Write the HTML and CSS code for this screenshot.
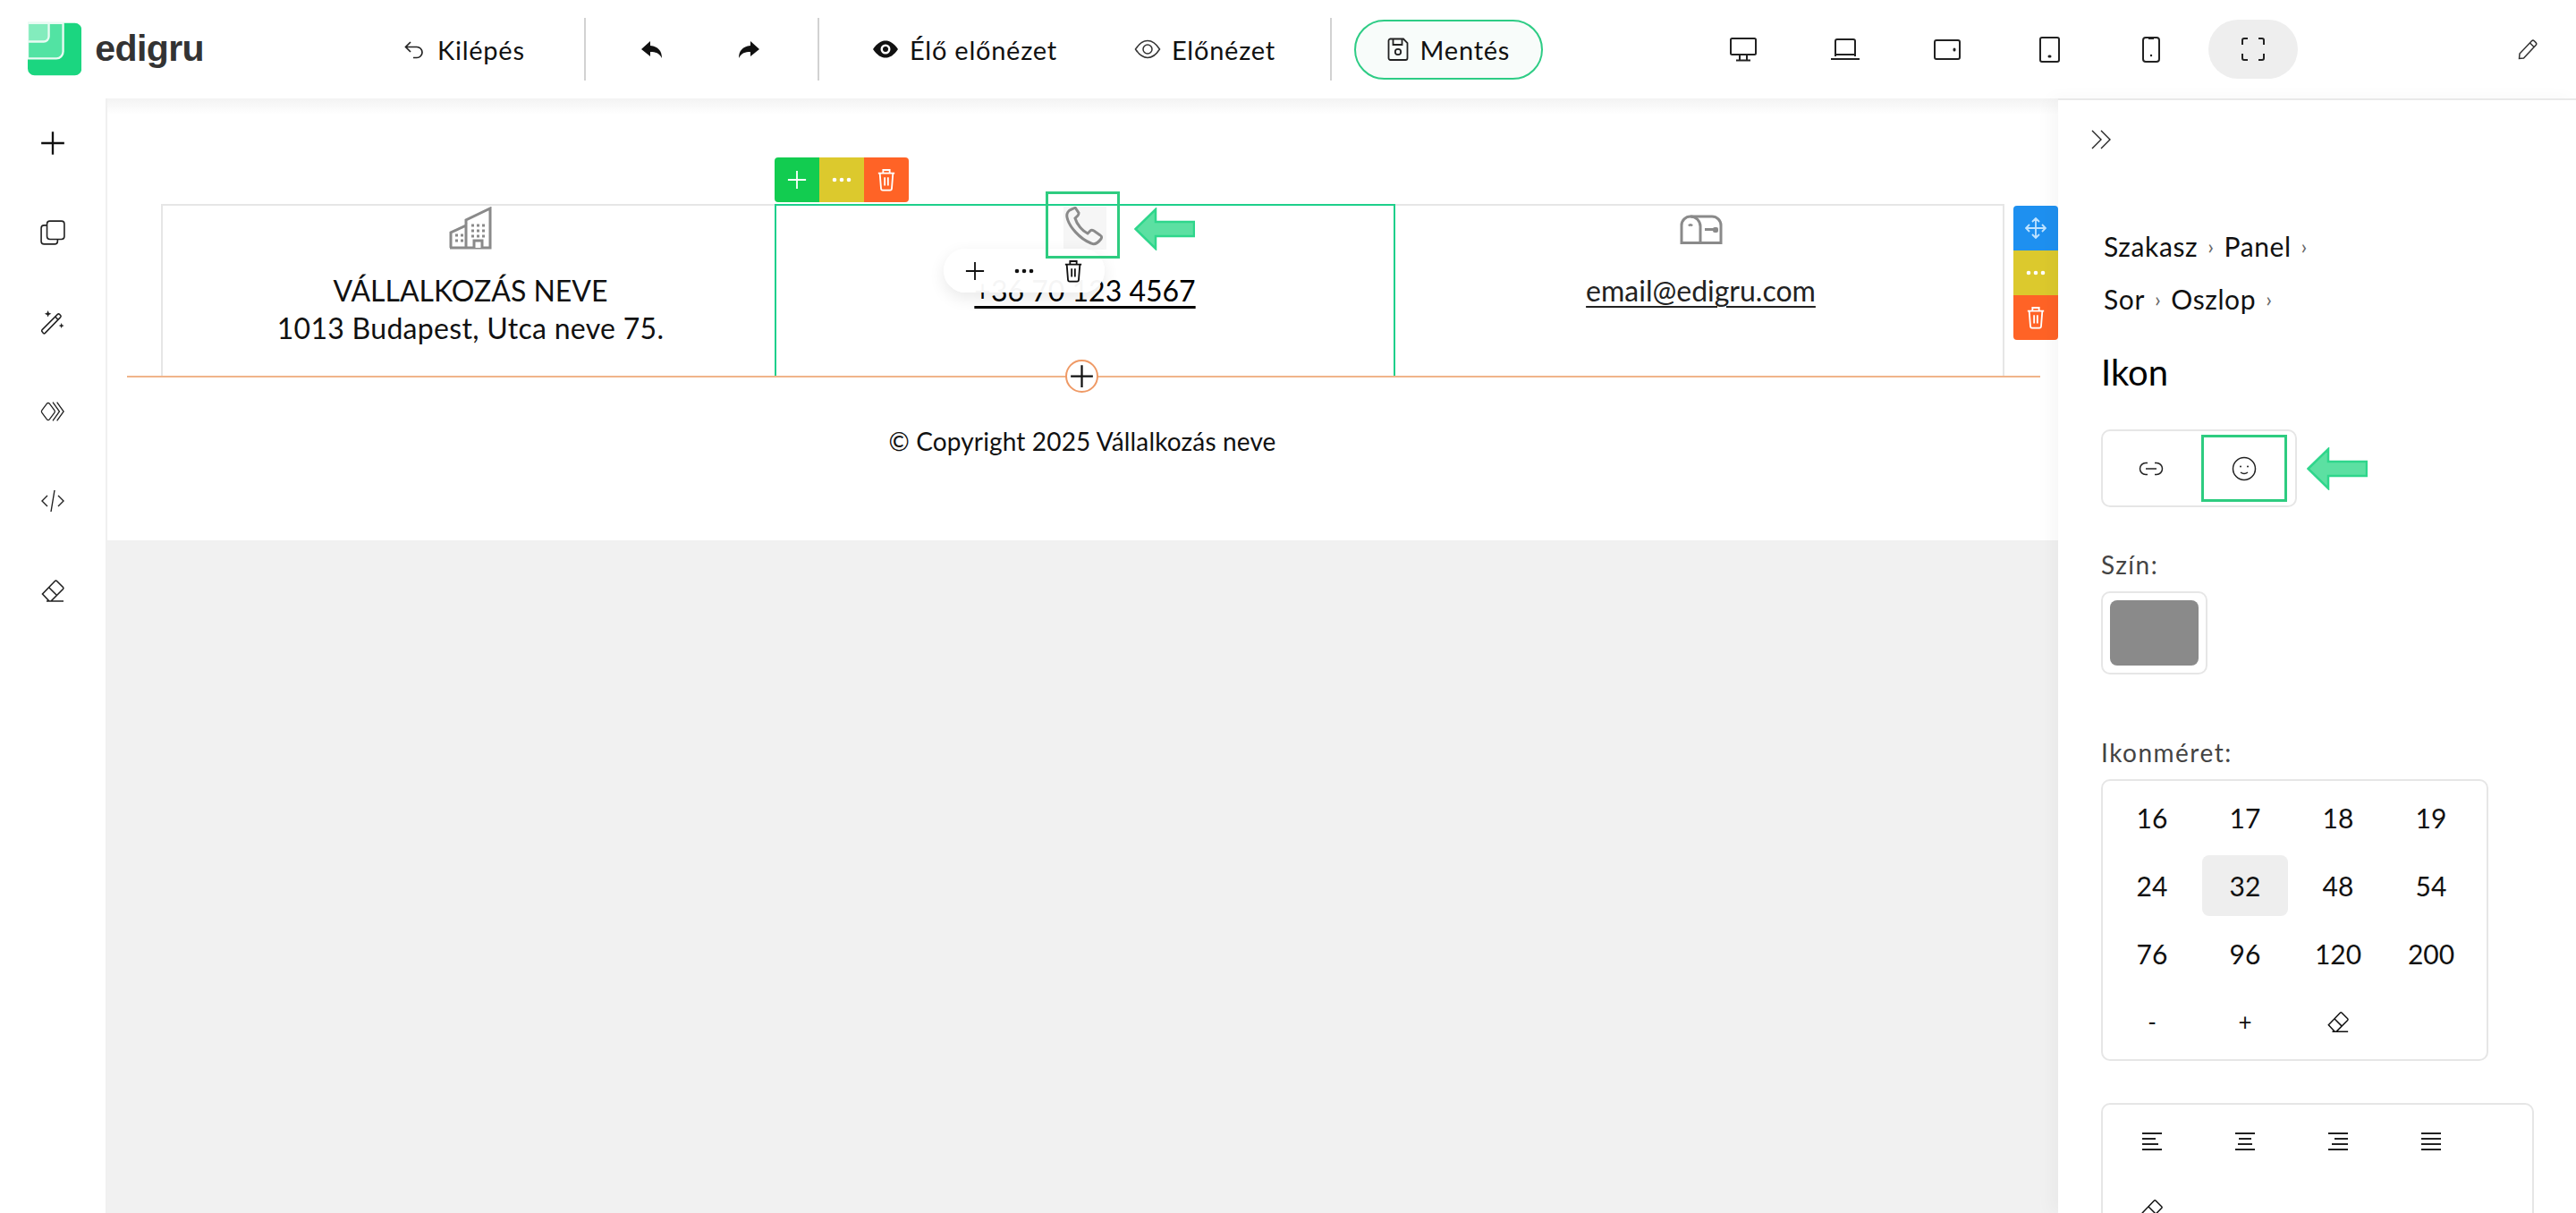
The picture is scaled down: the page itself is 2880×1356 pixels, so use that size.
FILE: index.html
```html
<!DOCTYPE html>
<html lang="hu">
<head>
<meta charset="utf-8">
<title>edigru</title>
<link rel="stylesheet" href="styles.css">
</head>
<body>
<svg class="defs" width="0" height="0" aria-hidden="true">
  <symbol id="trash" viewBox="0 0 24 28"><path d="M2 6h20M8 6V2h8v4M4 6l1.500 19a2 2 0 0 0 2 1.800h9a2 2 0 0 0 2-1.800L20 6M10 11v10M14 11v10" fill="none" stroke="currentColor" stroke-width="2"/></symbol>
  <symbol id="eraser" viewBox="0 0 28 28"><path d="M10 26 2.500 18 16.500 3.500a1.500 1.500 0 0 1 2 0l7 7a1.500 1.500 0 0 1 0 2L12 26M9.500 10.500l9 9M7 26h19" fill="none" stroke="currentColor" stroke-width="1.600"/></symbol>
  <symbol id="plus" viewBox="0 0 24 24"><path d="M12 1v22M1 12h22" fill="none" stroke="currentColor" stroke-width="2"/></symbol>
  <symbol id="dots" viewBox="0 0 24 6"><circle cx="4" cy="3" r="2.300" fill="currentColor"/><circle cx="12" cy="3" r="2.300" fill="currentColor"/><circle cx="20" cy="3" r="2.300" fill="currentColor"/></symbol>
  <symbol id="arrow" viewBox="0 0 68 48"><path d="M1.500 24 24 2v14h43v16H24v14z" fill="#5ce0a2" stroke="#2fd68c" stroke-width="2.500"/></symbol>
</svg>

<div class="app">
  <header class="topbar">
    <a class="brand">
      <svg class="brand-mark" viewBox="0 0 64 62"><rect width="64" height="62" rx="8" fill="#1bd680"/><path d="M0 0h42v34a8 8 0 0 1-8 8H0z" fill="#52e3a3" stroke="#e9fbf3" stroke-width="2.500"/><path d="M0 0h25v16a6 6 0 0 1-6 6H0z" fill="#83ecbd" stroke="#e9fbf3" stroke-width="2.500"/></svg>
      <span class="brand-name">ed<span class="brand-i">i</span>gru</span>
    </a>
    <button class="nav-btn nav-exit"><svg class="ic-nav" viewBox="0 0 24 24"><path d="M8 4 2.500 9.500 8 15M3 9.500h12a6 6 0 0 1 6 6v0a6 6 0 0 1-6 6h-4" fill="none" stroke="#222" stroke-width="1.700"/></svg>Kilépés</button>
    <span class="vline vline-a"></span>
    <button class="icon-btn undo"><svg viewBox="0 0 26 26"><path d="M11 4 1 13l10 8v-5c6 0 10 1 13 7 0-8-4-13-13-14z" fill="#111"/></svg></button>
    <button class="icon-btn redo"><svg viewBox="0 0 26 26"><path d="M15 4l10 9-10 8v-5C9 16 5 17 2 23c0-8 4-13 13-14z" fill="#111"/></svg></button>
    <span class="vline vline-b"></span>
    <button class="nav-btn nav-live"><svg class="ic-eye" viewBox="0 0 30 22"><path d="M1 11C6 4 10 1.500 15 1.500S24 4 29 11c-5 7-9 9.500-14 9.500S6 18 1 11z" fill="#111"/><circle cx="15" cy="11" r="5.500" fill="#fff"/><path d="M15 7.500V11h3.500" fill="#111"/><circle cx="15" cy="11" r="3" fill="#111"/></svg>Élő előnézet</button>
    <button class="nav-btn nav-preview"><svg class="ic-eye" viewBox="0 0 30 22"><path d="M1.500 11C6 4 10 1.500 15 1.500S24 4 28.500 11C24 18 20 20.500 15 20.500S6 18 1.500 11z" fill="none" stroke="#333" stroke-width="1.500"/><circle cx="15" cy="11" r="5" fill="none" stroke="#333" stroke-width="1.500"/></svg>Előnézet</button>
    <span class="vline vline-c"></span>
    <button class="save-btn"><svg class="ic-save" viewBox="0 0 24 26"><path d="M3 1.500h15L22.500 6v17a2 2 0 0 1-2 2h-17a2 2 0 0 1-2-2V3.500a2 2 0 0 1 2-2zM6.500 1.500V8h10V1.500" fill="none" stroke="#222" stroke-width="1.800"/><circle cx="12" cy="16" r="3.200" fill="none" stroke="#222" stroke-width="1.800"/></svg>Mentés</button>
    <div class="devices">
      <button class="dev"><svg width="30" height="27" viewBox="0 0 30 27"><rect x="1" y="1" width="28" height="18" rx="1.500" fill="none" stroke="#222" stroke-width="2"/><path d="M11 19v6M19 19v6M7 25.500h16" fill="none" stroke="#222" stroke-width="2"/></svg></button>
      <button class="dev"><svg width="32" height="24" viewBox="0 0 32 24"><path d="M5 20V3a2 2 0 0 1 2-2h18a2 2 0 0 1 2 2v17" fill="none" stroke="#222" stroke-width="2"/><path d="M5 18h22M0 23h32" stroke="#222" stroke-width="2"/></svg></button>
      <button class="dev"><svg width="30" height="23" viewBox="0 0 30 23"><rect x="1" y="1" width="28" height="21" rx="2" fill="none" stroke="#222" stroke-width="2"/><rect x="21.500" y="9.500" width="3" height="4" rx="1.500" fill="#222"/></svg></button>
      <button class="dev"><svg width="23" height="29" viewBox="0 0 23 29"><rect x="1" y="1" width="21" height="27" rx="2" fill="none" stroke="#222" stroke-width="2"/><rect x="9.500" y="20.500" width="4" height="3" rx="1.500" fill="#222"/></svg></button>
      <button class="dev"><svg width="20" height="29" viewBox="0 0 20 29"><rect x="1" y="1" width="18" height="27" rx="3" fill="none" stroke="#222" stroke-width="2"/><path d="M7 2h6" stroke="#222" stroke-width="2"/><circle cx="10" cy="21" r="1.200" fill="#222"/></svg></button>
      <button class="dev dev-on"><svg width="26" height="26" viewBox="0 0 26 26"><path d="M1 8V3a2 2 0 0 1 2-2h4M19 1h4a2 2 0 0 1 2 2v5M25 18v5a2 2 0 0 1-2 2h-4M7 25H3a2 2 0 0 1-2-2v-5" fill="none" stroke="#222" stroke-width="2"/></svg></button>
    </div>
    <button class="pencil"><svg width="22" height="23" viewBox="0 0 22 23"><path d="M1.500 21.500 2 16 15.500 1.800a2 2 0 0 1 2.800 0l1.800 1.800a2 2 0 0 1 0 2.800L6.500 21zM13.500 4l5 5" fill="none" stroke="#333" stroke-width="1.500"/></svg></button>
  </header>

  <div class="workspace">
    <nav class="rail">
      <svg class="rail-ic" viewBox="0 0 24 24"><use href="#plus"/></svg>
      <svg class="rail-ic" viewBox="0 0 26 26"><rect x="7" y="1" width="18" height="19" rx="3" fill="none" stroke="#222" stroke-width="1.500"/><path d="M7 5.500H4a3 3 0 0 0-3 3V22a3 3 0 0 0 3 3h11a3 3 0 0 0 3-3v-2" fill="none" stroke="#222" stroke-width="1.500"/></svg>
      <svg class="rail-ic" viewBox="0 0 26 26"><path d="M2 21 18 5a1.500 1.500 0 0 1 2 0l1 1a1.500 1.500 0 0 1 0 2L5 24.500a1.300 1.300 0 0 1-1.800 0l-1.200-1.500a1.300 1.300 0 0 1 0-2zM15.500 7.500l3.500 3.500" fill="none" stroke="#222" stroke-width="1.400"/><path d="M8 1l1 2.500L11.500 4.500 9 5.500 8 8 7 5.500 4.500 4.500 7 3.500zM22 14l.8 2 2 .8-2 .8-.8 2-.8-2-2-.8 2-.8z" fill="#222"/></svg>
      <svg class="rail-ic" viewBox="0 0 30 24"><path d="M2 10.500 8 2.500a2 2 0 0 1 3 0l6 8a2.500 2.500 0 0 1 0 3l-6 8a2 2 0 0 1-3 0l-6-8a2.500 2.500 0 0 1 0-3z" fill="none" stroke="#222" stroke-width="1.400"/><path d="M15 1l8 11-8 11M20 1l8 11-8 11" fill="none" stroke="#222" stroke-width="1.400"/></svg>
      <svg class="rail-ic" viewBox="0 0 28 26"><path d="M8 7 2 13l6 6M20 7l6 6-6 6M16 1l-4 24" fill="none" stroke="#222" stroke-width="1.400"/></svg>
      <svg class="rail-ic ic-dark"><use href="#eraser"/></svg>
    </nav>

    <main class="stage">
      <section class="page">
        <div class="contact-row">
          <div class="cell">
            <svg class="ic-cell" viewBox="0 0 48 48"><path d="M2 46V29l17-8v25M19 46V15L46 2v44zM1 46h46" fill="none" stroke="#8a8a8a" stroke-width="3"/><path d="M26 40h0M25 21h3M31 21h3M37 21h3M25 27h3M31 27h3M37 27h3M25 33h3M31 33h3M37 33h3M7 32h3M13 32h3M7 38h3M13 38h3" stroke="#8a8a8a" stroke-width="3"/><path d="M28 46v-8h9v8" fill="#fff" stroke="#8a8a8a" stroke-width="3"/></svg>
            <p class="cell-text">VÁLLALKOZÁS NEVE<br><span class="addr">1013 Budapest, Utca neve 75.</span></p>
          </div>
          <div class="cell cell-active">
            <div class="ic-cell ic-phone"><svg viewBox="0 0 48 48"><path d="M9 3C6 4 3 7 4 12c2 10 14 24 27 29 4 2 8-1 11-5 1-2 1-3-1-4l-7-5c-2-1-3-1-4 0l-3 3c-6-3-12-10-14-17l3-3c1-1 1-2 1-3l-4-6C12 2 11 2 9 3z" fill="none" stroke="#8a8a8a" stroke-width="3"/></svg></div>
            <p class="cell-text"><a class="link">+36 70 123 4567</a></p>
          </div>
          <div class="cell">
            <svg class="ic-cell ic-mail" viewBox="0 0 48 33"><path d="M12 2h24a10 10 0 0 1 10 10v19.500H2V12A10 10 0 0 1 12 2z" fill="none" stroke="#8a8a8a" stroke-width="3"/><path d="M12 2a11 11 0 0 1 11 11v18.500" fill="none" stroke="#8a8a8a" stroke-width="3"/><path d="M10 12.500q2-2.500 4 0" fill="none" stroke="#8a8a8a" stroke-width="2.500"/><path d="M28 15h14v3h-14z" fill="#8a8a8a"/><rect x="37" y="14" width="6" height="6" rx="2" fill="#8a8a8a"/></svg>
            <p class="cell-text"><a class="link link-mail">email@edigru.com</a></p>
          </div>
        </div>
        <p class="copy">© Copyright 2025 Vállalkozás neve</p>

        <span class="row-line"></span>
        <span class="row-add"><svg width="27" height="27" viewBox="0 0 24 24"><use href="#plus"/></svg></span>

        <div class="tools tools-h">
          <span class="tool t-green"><svg width="22" height="22" viewBox="0 0 24 24"><use href="#plus"/></svg></span>
          <span class="tool t-yellow"><svg width="24" height="6" viewBox="0 0 24 6"><use href="#dots"/></svg></span>
          <span class="tool t-orange"><svg width="22" height="26" viewBox="0 0 24 28"><use href="#trash"/></svg></span>
        </div>
        <div class="tools tools-v">
          <span class="tool t-blue"><svg width="24" height="24" viewBox="0 0 24 24"><path d="M12 1v22M1 12h22M8 5l4-4 4 4M8 19l4 4 4-4M5 8l-4 4 4 4M19 8l4 4-4 4" fill="none" stroke="#bfe3ff" stroke-width="1.800"/></svg></span>
          <span class="tool t-yellow"><svg width="24" height="6" viewBox="0 0 24 6"><use href="#dots"/></svg></span>
          <span class="tool t-orange"><svg width="22" height="26" viewBox="0 0 24 28"><use href="#trash"/></svg></span>
        </div>
        <div class="pill">
          <svg width="22" height="22" viewBox="0 0 24 24"><use href="#plus"/></svg>
          <svg width="26" height="6" viewBox="0 0 24 6"><use href="#dots"/></svg>
          <svg width="22" height="26" viewBox="0 0 24 28"><use href="#trash"/></svg>
        </div>
        <span class="focus-box"></span>
        <svg class="hint-arrow hint-phone"><use href="#arrow"/></svg>
      </section>
    </main>

    <aside class="panel">
      <svg class="collapse" viewBox="0 0 23 22"><path d="M1 1l10 10L1 21M11 1l10 10-10 10" fill="none" stroke="#222" stroke-width="1.400"/></svg>
      <div class="crumbs">
        <div class="crumb-row"><span>Szakasz</span><i class="sep">›</i><span>Panel</span><i class="sep">›</i></div>
        <div class="crumb-row"><span>Sor</span><i class="sep">›</i><span>Oszlop</span><i class="sep">›</i></div>
      </div>
      <h2 class="panel-title">Ikon</h2>
      <div class="toggle-wrap">
        <div class="box toggle">
          <span class="tg"><svg width="28" height="16" viewBox="0 0 28 16"><path d="M10 1.500H8a6.500 6.500 0 0 0 0 13h2M18 1.500h2a6.500 6.500 0 0 1 0 13h-2M8 8h12" fill="none" stroke="#222" stroke-width="1.500"/></svg></span>
          <span class="tg tg-on"><svg width="28" height="28" viewBox="0 0 28 28"><circle cx="14" cy="14" r="12.500" fill="none" stroke="#222" stroke-width="1.500"/><circle cx="10" cy="11.500" r="1" fill="#222"/><circle cx="18" cy="11.500" r="1" fill="#222"/><path d="M10 18q4 3 8 0" fill="none" stroke="#222" stroke-width="1.500"/></svg></span>
        </div>
        <svg class="hint-arrow"><use href="#arrow"/></svg>
      </div>
      <label class="field">Szín:</label>
      <div class="box swatch"><span class="swatch-fill"></span></div>
      <label class="field field-size">Ikonméret:</label>
      <div class="box grid size-grid">
        <span>16</span><span>17</span><span>18</span><span>19</span>
        <span>24</span><span class="on">32</span><span>48</span><span>54</span>
        <span>76</span><span>96</span><span>120</span><span>200</span>
        <span class="sm">-</span><span class="sm">+</span><span><svg width="26" height="26" viewBox="0 0 28 28"><use href="#eraser"/></svg></span>
      </div>
      <div class="box grid align-grid">
        <span><svg width="22" height="20" viewBox="0 0 22 20"><path d="M0 1h22M0 7h15M0 13h18M0 19h22" stroke="#222" stroke-width="2"/></svg></span>
        <span><svg width="22" height="20" viewBox="0 0 22 20"><path d="M0 1h22M4 7h14M3 13h16M0 19h22" stroke="#222" stroke-width="2"/></svg></span>
        <span><svg width="22" height="20" viewBox="0 0 22 20"><path d="M0 1h22M7 7h15M4 13h18M0 19h22" stroke="#222" stroke-width="2"/></svg></span>
        <span><svg width="22" height="20" viewBox="0 0 22 20"><path d="M0 1h22M0 7h22M0 13h22M0 19h22" stroke="#222" stroke-width="2"/></svg></span>
        <span><svg width="26" height="26" viewBox="0 0 28 28"><use href="#eraser"/></svg></span>
      </div>
    </aside>
  </div>
</div>
</body>
</html>
```

FILE: styles.css
```css
* { box-sizing: border-box; }
html, body { margin: 0; height: 100%; overflow: hidden; }
body { font-family: "Lato", "Noto Sans", sans-serif; color: #111; background: #fff; }
.defs { position: absolute; }
button { font: inherit; color: inherit; background: none; border: 0; padding: 0; display: flex; align-items: center; }
p, h2 { margin: 0; }

.app { height: 1356px; display: flex; flex-direction: column; }

/* top bar */
.topbar { height: 110px; flex: none; display: flex; align-items: center; padding-left: 31px; position: relative; background: #fff; }
.brand { display: flex; align-items: center; width: 197px; margin-top: -1px; }
.brand-mark { width: 63px; height: 62px; }
.brand-name { font-family: "Liberation Sans", sans-serif; font-weight: 700; font-size: 41px; color: #333; margin-left: 15px; letter-spacing: -.6px; }
.brand-i { color: #333; }
.nav-btn { font-size: 29px; letter-spacing: .75px; color: #111; white-space: nowrap; }
.ic-nav { width: 24px; height: 24px; margin-right: 14px; }
.ic-eye { width: 30px; height: 22px; margin-right: 12px; }
.nav-exit { margin-left: 223px; width: 141px; }
.vline { width: 2px; height: 70px; background: #d2d2d2; flex: none; }
.vline-a { margin-left: 61px; }
.vline-b { margin-left: 0; }
.vline-c { margin-left: 61px; }
.icon-btn svg { width: 26px; height: 26px; display: block; }
.undo { margin-left: 61px; }
.redo { margin-left: 82px; margin-right: 64px; }
.nav-live { margin-left: 59px; width: 215px; }
.nav-preview { margin-left: 78px; }
.save-btn { margin-left: 25px; width: 211px; height: 67px; border: 2px solid #2ecc85; border-radius: 34px; background: #f8fcfa; justify-content: center; font-size: 29px; letter-spacing: .75px; }
.ic-save { width: 24px; height: 26px; margin-right: 13px; }
.devices { position: absolute; left: 1892px; top: 22px; height: 66px; display: flex; }
.dev { width: 114px; height: 66px; justify-content: center; }
.dev-on { width: 100px; margin-left: 7px; background: #eee; border-radius: 33px; }
.pencil { position: absolute; left: 2815px; top: 44px; }

/* layout */
.workspace { flex: 1; display: flex; min-height: 0; }
.rail { width: 118px; flex: none; display: flex; flex-direction: column; align-items: center; gap: 72px; padding-top: 36px; background: #fff; }
.rail-ic { width: 28px; height: 28px; flex: none; color: #111; }
.ic-dark { color: #222; }
.stage { flex: 1; background: #f1f1f1; border-left: 2px solid #f0f0f0; position: relative; }
.stage::before { content: ""; position: absolute; left: 0; right: 0; top: 0; height: 18px; background: linear-gradient(#f3f3f3, rgba(255,255,255,0)); z-index: 2; }

/* page */
.page { height: 494px; background: #fff; padding: 118px 60px 0; position: relative; }
.contact-row { height: 193px; display: grid; grid-template-columns: 686px 690px 685px; border: 2px solid #e6e6e6; border-bottom: 0; width: 2061px; }
.cell { display: flex; flex-direction: column; align-items: center; text-align: center; border-left: 2px solid transparent; margin-top: -2px; padding-top: 3px; }
.ic-cell { width: 48px; height: 48px; display: block; flex: none; }
.ic-mail { height: 33px; margin: 9px 0 6px; }
.cell-text { font-size: 32px; line-height: 42px; margin-top: 25px; color: #111; }
.addr { letter-spacing: .3px; }
.cell-active { border: 2px solid #1ecf8b; border-bottom: 0; padding-top: 1px; margin-left: -2px; margin-right: -2px; }
.ic-phone { background: #f6f6f6; }
.ic-phone svg { width: 48px; height: 48px; display: block; }
.link { color: #000; text-decoration: underline; text-decoration-thickness: 3px; text-underline-offset: 5px; }
.link-mail { color: #222; text-decoration-thickness: 2px; font-size: 32px; }
.copy { text-align: center; font-size: 28px; line-height: 36px; margin-top: 54px; padding-right: 0; width: 2060px; letter-spacing: .15px; }

/* overlays on the page */
.row-line { position: absolute; left: 22px; right: 20px; top: 310px; height: 2px; background: #f0b48a; }
.row-add { position: absolute; left: 1071px; top: 292px; width: 37px; height: 37px; border-radius: 50%; border: 2px solid #ef9a66; background: #fff; display: flex; align-items: center; justify-content: center; color: #111; }
.tools { position: absolute; display: flex; border-radius: 4px; overflow: hidden; color: #fff; }
.tools-h { left: 746px; top: 66px; }
.tools-v { right: 0; top: 120px; flex-direction: column; }
.tool { width: 50px; height: 50px; display: flex; align-items: center; justify-content: center; }
.t-green { background: #12cc50; }
.t-yellow { background: #dcc92d; }
.t-orange { background: #ff6326; }
.t-blue { background: #1e90f0; }
.pill { position: absolute; left: 935px; top: 168px; width: 180px; height: 49px; border-radius: 25px; background: rgba(255,255,255,.96); box-shadow: 0 6px 18px rgba(0,0,0,.09); display: flex; align-items: center; justify-content: space-around; padding: 0 8px; color: #111; }
.focus-box { position: absolute; left: 1049px; top: 104px; width: 83px; height: 75px; border: 3px solid #2ecc80; }
.hint-arrow { width: 68px; height: 48px; flex: none; }
.hint-phone { position: absolute; left: 1148px; top: 122px; }

/* side panel */
.panel { width: 580px; flex: none; background: #fff; border-top: 2px solid #e9e9e9; padding: 33px 48px 0; position: relative; z-index: 3; box-shadow: -8px 0 18px rgba(0,0,0,.035); }
.collapse { width: 23px; height: 22px; display: block; margin-left: -11px; }
.crumbs { margin-top: 78px; font-size: 30px; color: #111; letter-spacing: .6px; padding-left: 3px; }
.crumb-row { height: 59px; display: flex; align-items: center; }
.sep { font-style: normal; color: #666; font-size: 24px; margin: 0 11px; }
.panel-title { font-size: 40px; font-weight: 400; color: #000; line-height: 50px; margin-top: 28px; }
.toggle-wrap { display: flex; align-items: center; margin-top: 39px; gap: 11px; }
.box { border: 2px solid #e6e6e6; border-radius: 10px; }
.toggle { width: 219px; height: 87px; display: flex; align-items: center; padding-left: 6px; gap: 8px; }
.tg { width: 96px; height: 75px; display: flex; align-items: center; justify-content: center; }
.tg-on { border: 3px solid #2ecc80; }
.field { display: block; font-size: 28px; line-height: 36px; color: #444; letter-spacing: 1.500px; margin-top: 46px; }
.swatch { width: 119px; height: 93px; padding: 8px; margin-top: 12px; }
.swatch-fill { display: block; height: 100%; background: #8a8a8a; border-radius: 8px; }
.field-size { margin-top: 69px; }
.grid { display: grid; grid-template-columns: repeat(4, 96px); grid-auto-rows: 68px; gap: 8px; padding: 7px; margin-top: 12px; }
.grid span { display: flex; align-items: center; justify-content: center; font-size: 30px; border-radius: 8px; color: #111; }
.grid .on { background: #eee; }
.grid .sm { font-size: 26px; }
.size-grid { width: 433px; height: 315px; }
.align-grid { width: 484px; margin-top: 47px; height: 300px; }
```
